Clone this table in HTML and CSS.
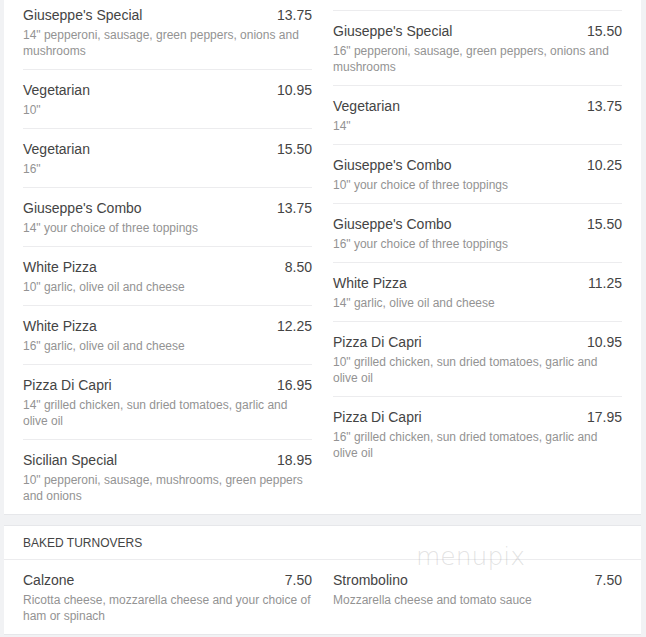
FILE: index.html
```html
<!DOCTYPE html>
<html>
<head>
<meta charset="utf-8">
<link rel="stylesheet" href="styles.css">
</head>
<body>
<div class="viewport">
  <section class="card card-pizza">
    <div class="columns">
      <div class="col col-left">
        <div class="item">
          <div class="item-head"><span class="name">Giuseppe's Special</span><span class="price">13.75</span></div>
          <div class="desc">14" pepperoni, sausage, green peppers, onions and mushrooms</div>
        </div>
        <div class="item">
          <div class="item-head"><span class="name">Vegetarian</span><span class="price">10.95</span></div>
          <div class="desc">10"</div>
        </div>
        <div class="item">
          <div class="item-head"><span class="name">Vegetarian</span><span class="price">15.50</span></div>
          <div class="desc">16"</div>
        </div>
        <div class="item">
          <div class="item-head"><span class="name">Giuseppe's Combo</span><span class="price">13.75</span></div>
          <div class="desc">14" your choice of three toppings</div>
        </div>
        <div class="item">
          <div class="item-head"><span class="name">White Pizza</span><span class="price">8.50</span></div>
          <div class="desc">10" garlic, olive oil and cheese</div>
        </div>
        <div class="item">
          <div class="item-head"><span class="name">White Pizza</span><span class="price">12.25</span></div>
          <div class="desc">16" garlic, olive oil and cheese</div>
        </div>
        <div class="item">
          <div class="item-head"><span class="name">Pizza Di Capri</span><span class="price">16.95</span></div>
          <div class="desc">14" grilled chicken, sun dried tomatoes, garlic and olive oil</div>
        </div>
        <div class="item">
          <div class="item-head"><span class="name">Sicilian Special</span><span class="price">18.95</span></div>
          <div class="desc">10" pepperoni, sausage, mushrooms, green peppers and onions</div>
        </div>
      </div>
      <div class="col col-right">
        <div class="item">
          <div class="item-head"><span class="name">Giuseppe's Special</span><span class="price">15.50</span></div>
          <div class="desc">16" pepperoni, sausage, green peppers, onions and mushrooms</div>
        </div>
        <div class="item">
          <div class="item-head"><span class="name">Vegetarian</span><span class="price">13.75</span></div>
          <div class="desc">14"</div>
        </div>
        <div class="item">
          <div class="item-head"><span class="name">Giuseppe's Combo</span><span class="price">10.25</span></div>
          <div class="desc">10" your choice of three toppings</div>
        </div>
        <div class="item">
          <div class="item-head"><span class="name">Giuseppe's Combo</span><span class="price">15.50</span></div>
          <div class="desc">16" your choice of three toppings</div>
        </div>
        <div class="item">
          <div class="item-head"><span class="name">White Pizza</span><span class="price">11.25</span></div>
          <div class="desc">14" garlic, olive oil and cheese</div>
        </div>
        <div class="item">
          <div class="item-head"><span class="name">Pizza Di Capri</span><span class="price">10.95</span></div>
          <div class="desc">10" grilled chicken, sun dried tomatoes, garlic and olive oil</div>
        </div>
        <div class="item">
          <div class="item-head"><span class="name">Pizza Di Capri</span><span class="price">17.95</span></div>
          <div class="desc">16" grilled chicken, sun dried tomatoes, garlic and olive oil</div>
        </div>
      </div>
    </div>
  </section>

  <section class="card card-turnovers">
    <h2 class="section-title">BAKED TURNOVERS</h2>
    <div class="columns">
      <div class="col">
        <div class="item">
          <div class="item-head"><span class="name">Calzone</span><span class="price">7.50</span></div>
          <div class="desc">Ricotta cheese, mozzarella cheese and your choice of ham or spinach</div>
        </div>
      </div>
      <div class="col">
        <div class="item">
          <div class="item-head"><span class="name">Strombolino</span><span class="price">7.50</span></div>
          <div class="desc">Mozzarella cheese and tomato sauce</div>
        </div>
      </div>
    </div>
    <div class="watermark">menupix</div>
  </section>
</div>
</body>
</html>
```

FILE: styles.css
```css
html, body {
  margin: 0;
  padding: 0;
  background: #f1f2f4;
}

body {
  font-family: "Liberation Sans", Arial, sans-serif;
  color: #3b3b3b;
}

.viewport {
  height: 637px;
  overflow: hidden;
}

.card {
  background: #ffffff;
  margin: 0 5px 0 4px;
  padding: 0 19px;
  border-bottom: 1px solid #e6e7ea;
}

.card-pizza {
  margin-bottom: 10px;
}

.card-turnovers {
  position: relative;
  border-top: 1px solid #e6e7ea;
}

.columns {
  display: flex;
  gap: 21px;
}

.col {
  flex: 1 1 0;
  min-width: 0;
  display: flex;
  flex-direction: column;
}

/* the list is scrolled: the first visible rows start part-way */
.col-left .item:first-child {
  padding-top: 5px;
}

.col-right {
  padding-top: 10px;
}

.col-right .item:first-child {
  border-top: 1px solid #ececee;
}

.item {
  padding: 10px 0 10px;
  border-bottom: 1px solid #ececee;
}

.col .item:last-child {
  border-bottom: none;
}

.item-head {
  display: flex;
  justify-content: space-between;
  font-size: 14px;
  line-height: 20px;
  color: #444444;
}

.desc {
  margin-top: 2px;
  font-size: 12px;
  line-height: 16px;
  color: #939393;
}

.section-title {
  margin: 0 -19px;
  padding: 9px 19px 8px;
  font-size: 12px;
  line-height: 16px;
  font-weight: normal;
  color: #444444;
  border-bottom: 1px solid #ececee;
}

.watermark {
  position: absolute;
  left: 412px;
  top: 16px;
  font-family: "DejaVu Sans", sans-serif;
  font-weight: 200;
  font-size: 25px;
  letter-spacing: 0;
  color: rgba(160, 160, 160, 0.3);
  pointer-events: none;
}
```
